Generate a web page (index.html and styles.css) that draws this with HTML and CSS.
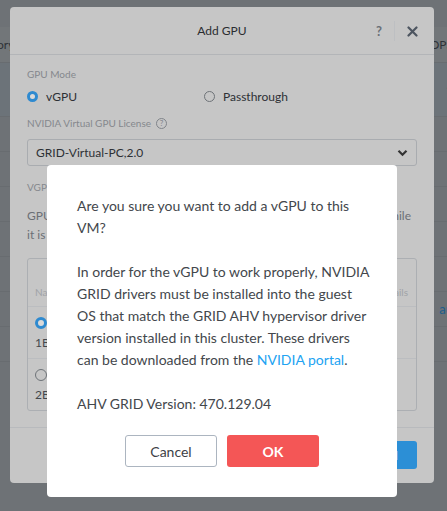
FILE: index.html
```html
<!DOCTYPE html>
<html>
<head>
<meta charset="utf-8">
<link rel="stylesheet" href="styles.css">
</head>
<body>
<div class="page">
  <div class="bg-row bg-head"><span class="bg-left">ory</span><span class="bg-right">OPS</span></div>
  <div class="bg-row bg-sel"><span></span><span class="bg-right">1</span></div>
  <div class="bg-row"></div>
  <div class="bg-row"></div>
  <div class="bg-row"></div>
  <div class="bg-row"></div>
  <div class="bg-row"></div>
  <div class="bg-row"><span></span><span class="bg-right bg-link">au</span></div>
  <div class="bg-row"></div>
</div>

<div class="modal">
  <div class="modal-head">
    <div class="modal-title">Add GPU</div>
    <div class="modal-tools">
      <span class="tool-help">?</span>
      <span class="tool-sep"></span>
      <svg class="tool-close" width="11" height="11" viewBox="0 0 11 11"><path d="M1.5 1.5L9.5 9.5M9.5 1.5L1.5 9.5" stroke="#4d5560" stroke-width="2.2" stroke-linecap="round"/></svg>
    </div>
  </div>
  <div class="modal-body">
    <div class="label">GPU Mode</div>
    <div class="radios">
      <div class="radio-item"><span class="radio on"></span>vGPU</div>
      <div class="radio-item"><span class="radio"></span>Passthrough</div>
    </div>
    <div class="label label-lic">NVIDIA Virtual GPU License <span class="qicon">?</span></div>
    <div class="select">GRID-Virtual-PC,2.0
      <svg class="chev" width="11" height="8" viewBox="0 0 11 8"><path d="M1.5 1.8L5.5 5.8L9.5 1.8" fill="none" stroke="#333" stroke-width="2.2"/></svg>
    </div>
    <div class="label label-vgp">VGPU Profile</div>
    <div class="desc">
      <div class="desc-line"><span>GPU profile determines the</span><span>memory a VM gets while</span></div>
      <div class="desc-line"><span>it is running on the host.</span></div>
    </div>
    <div class="table">
      <div class="t-head"><span>Name</span><span>Details</span></div>
      <div class="t-row"><span class="radio on"></span><span class="t-sub">1B</span></div>
      <div class="t-row last"><span class="radio"></span><span class="t-sub">2B</span></div>
    </div>
  </div>
  <div class="modal-foot">
    <button class="btn-add">Add</button>
  </div>
</div>

<div class="confirm">
  <p>Are you sure you want to add a vGPU to this VM?</p>
  <p>In order for the vGPU to work properly, NVIDIA GRID drivers must be installed into the guest OS that match the GRID AHV hypervisor driver version installed in this cluster. These drivers can be downloaded from the <a href="#">NVIDIA portal</a>.</p>
  <p>AHV GRID Version: 470.129.04</p>
  <div class="confirm-actions">
    <button class="btn btn-cancel">Cancel</button>
    <button class="btn btn-ok">OK</button>
  </div>
</div>
</body>
</html>
```

FILE: styles.css
```css
* { box-sizing: border-box; }
html, body { margin: 0; padding: 0; }
body {
  width: 447px;
  height: 511px;
  overflow: hidden;
  background: #6e7276;
  font-family: Lato, "Liberation Sans", sans-serif;
  position: relative;
}

/* background page */
.page { padding-top: 27px; }
.bg-row {
  height: 35px;
  border-bottom: 1px solid #686c70;
  display: flex;
  justify-content: space-between;
  align-items: center;
  font-size: 12px;
  color: #2e3237;
}
.bg-head { height: 36px; background: #727679; }
.bg-sel { height: 54px; background: #6c7379; }
.bg-left { margin-left: -3px; }
.bg-right { margin-right: -6px; }
.bg-link { color: #1d5d8c; font-size: 13px; }

/* Add GPU modal (dimmed) */
.modal {
  position: absolute;
  left: 10px;
  top: 7px;
  width: 424px;
  height: 476px;
  background: #c6c6c6;
  border-radius: 4px;
  display: flex;
  flex-direction: column;
}
.modal-head {
  flex: none;
  height: 48px;
  border-bottom: 1px solid #b3b5b8;
  display: flex;
  align-items: center;
  justify-content: center;
  position: relative;
}
.modal-title {
  font-size: 12px;
  color: #2a2d31;
}
.modal-tools {
  position: absolute;
  right: 16px;
  top: 14px;
  display: flex;
  align-items: center;
}
.tool-help {
  font-size: 13px;
  font-weight: 700;
  color: #6b7077;
  width: 10px;
}
.tool-sep {
  width: 1px;
  height: 20px;
  background: #bdbfc2;
  margin: 0 12px 0 8px;
}
.tool-close { display: block; }

.modal-body {
  padding: 12px 17px 0 17px;
  flex: 1;
  min-height: 0;
  overflow: hidden;
}
.label {
  font-size: 10px;
  color: #85888d;
  line-height: 14px;
}
.radios {
  display: flex;
  margin-top: 6px;
  height: 18px;
  align-items: center;
}
.radio-item {
  display: flex;
  align-items: center;
  font-size: 12px;
  color: #2d3035;
  width: 177px;
}
.radio {
  width: 11px;
  height: 11px;
  border-radius: 50%;
  border: 1px solid #6e7378;
  background: #c6c6c6;
  margin: 0 8px 0 0;
  flex: none;
}
.radio.on {
  border: 3.5px solid #2e8ad0;
  background: #dadada;
}
.label-lic { margin-top: 11px; display: flex; align-items: center; }
.qicon {
  display: inline-flex;
  width: 11px;
  height: 11px;
  border: 1px solid #80848a;
  border-radius: 50%;
  font-size: 8px;
  align-items: center;
  justify-content: center;
  margin-left: 5px;
  color: #80848a;
}
.select {
  margin-top: 9px;
  height: 27px;
  border: 1px solid #a9acb0;
  border-radius: 3px;
  padding: 0 8px;
  display: flex;
  align-items: center;
  justify-content: space-between;
  font-size: 12px;
  color: #2d3035;
}
.label-vgp { margin-top: 14px; }
.desc {
  margin-top: 12px;
  font-size: 12px;
  color: #6b6f75;
  line-height: 19px;
}
.desc-line {
  display: flex;
  justify-content: space-between;
  padding-right: 6px;
  white-space: nowrap;
}
.table {
  margin-top: 14px;
  border: 1px solid #acafb3;
  border-radius: 3px;
}
.t-head {
  height: 48px;
  border-bottom: 1px solid #bbbdc0;
  display: flex;
  justify-content: space-between;
  align-items: flex-end;
  padding: 0 8px 8px 7px;
  font-size: 10px;
  color: #a0a3a7;
}
.t-row {
  height: 52px;
  border-bottom: 1px solid #bbbdc0;
  padding: 10px 0 0 7px;
  display: flex;
  flex-direction: column;
}
.t-row.last { border-bottom: 0; height: 51px; }
.t-row .radio { width: 12px; height: 12px; }
.t-sub { font-size: 12px; color: #44484d; margin-top: 6px; line-height: 15px; }

.modal-foot {
  flex: none;
  height: 56px;
  border-top: 1px solid #b8babd;
  display: flex;
  justify-content: flex-end;
  align-items: flex-start;
  padding: 13px 17px 0 0;
}
.btn-add {
  width: 60px;
  height: 28px;
  border: 0;
  border-radius: 3px;
  background: #2c8fd6;
  color: #d9ecf8;
  font-family: inherit;
  font-weight: 700;
  font-size: 12px;
}

/* confirm dialog */
.confirm {
  position: absolute;
  left: 47px;
  top: 165px;
  width: 350px;
  height: 332px;
  background: #ffffff;
  border-radius: 4px;
  padding: 30px 26px 30px 30px;
  color: #43474c;
  font-size: 14px;
  line-height: 22px;
}
.confirm p { margin: 0 0 22px 0; }
.confirm a { color: #22a3f2; text-decoration: none; }
.confirm-actions {
  display: flex;
  justify-content: center;
  gap: 10px;
  margin-top: -2px;
  padding-right: 4px;
}
.btn {
  width: 92px;
  height: 32px;
  border-radius: 3px;
  font-family: inherit;
  font-size: 14px;
}
.btn-cancel {
  background: #fff;
  border: 1px solid #acb5c0;
  color: #3d4146;
}
.btn-ok {
  background: #f45656;
  border: 0;
  color: #fff;
  font-weight: 700;
}
```
